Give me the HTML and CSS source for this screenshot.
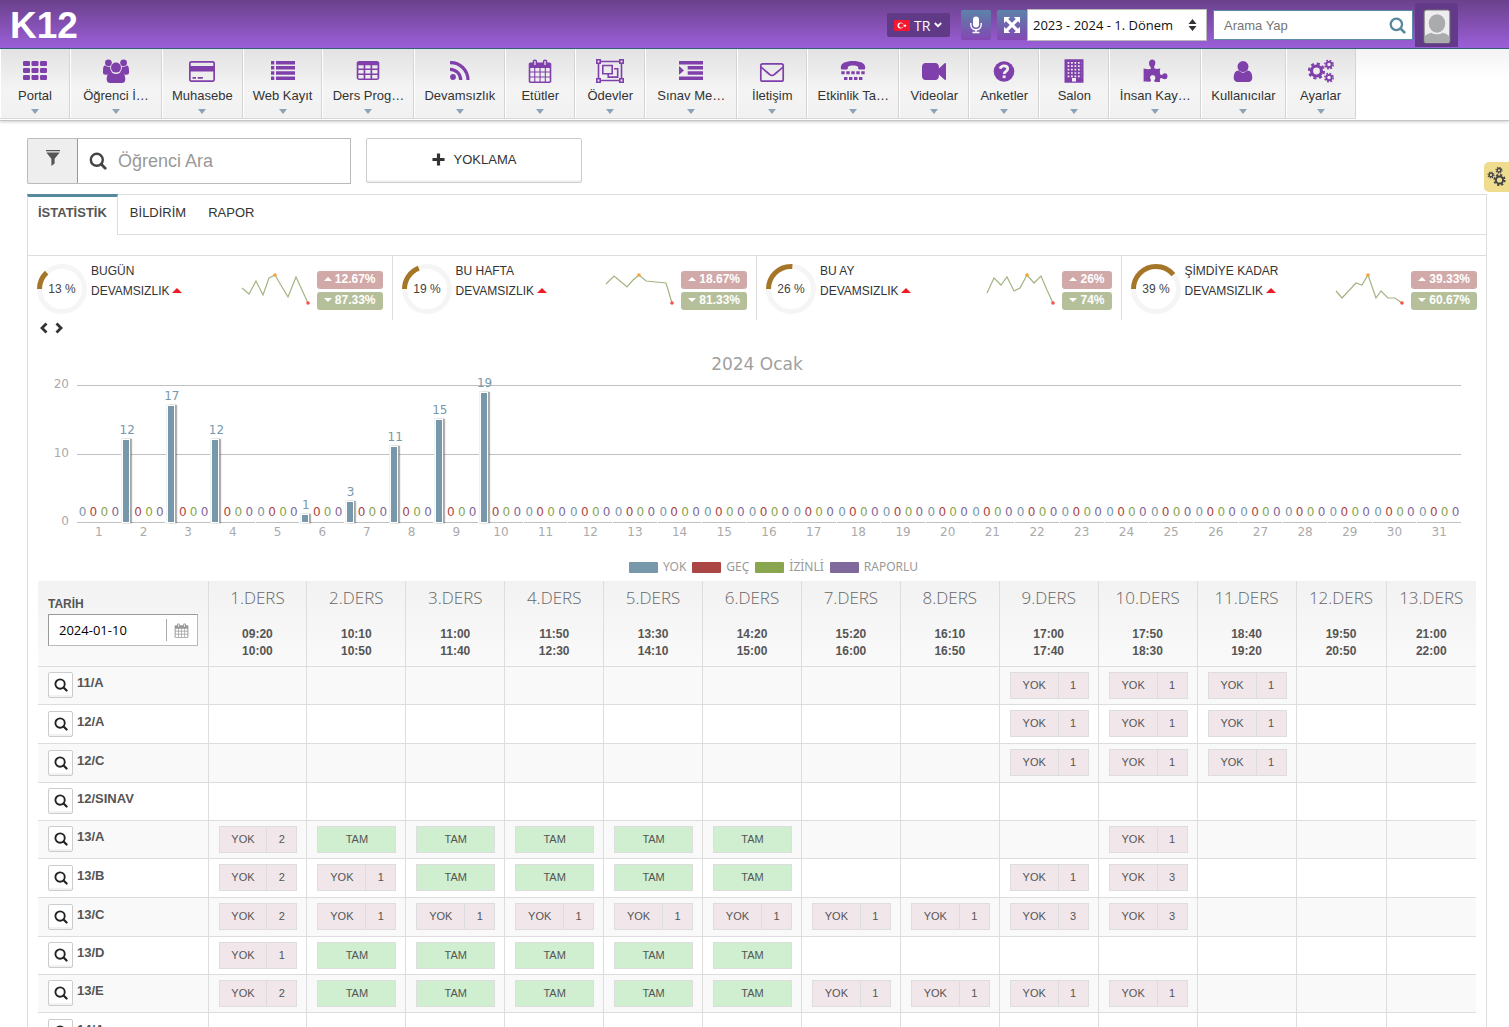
FILE: index.html
```html
<!DOCTYPE html>
<html lang="tr">
<head>
<meta charset="utf-8">
<meta name="viewport" content="width=device-width, initial-scale=1">
<title>K12</title>
<link rel="stylesheet" href="styles.css">
</head>
<body>
<svg class="sprite" aria-hidden="true">
  <symbol id="i-th" viewBox="0 0 28 24"><g fill="currentColor"><rect x="2" y="2" width="7" height="5" rx="1.2"/><rect x="10.5" y="2" width="7" height="5" rx="1.2"/><rect x="19" y="2" width="7" height="5" rx="1.2"/><rect x="2" y="9" width="7" height="5" rx="1.2"/><rect x="10.5" y="9" width="7" height="5" rx="1.2"/><rect x="19" y="9" width="7" height="5" rx="1.2"/><rect x="2" y="16" width="7" height="5" rx="1.2"/><rect x="10.5" y="16" width="7" height="5" rx="1.2"/><rect x="19" y="16" width="7" height="5" rx="1.2"/></g></symbol>
  <symbol id="i-users" viewBox="0 0 28 24"><g fill="currentColor"><circle cx="6.4" cy="3.8" r="3.4"/><circle cx="21.6" cy="3.8" r="3.4"/><path d="M1 11.5C1 8.400 1.800 6.600 2.900 6.600c.6 0 1.800 1.300 3.500 1.300.6 0 1.200-.1 1.700-.3-.1 2.200.6 4.200 2 5.800-2 .1-3.700.9-4.900 2.300H3.300C2 15.700 1 15 1 13.700zM27 11.500c0-3.100-.8-4.900-1.900-4.900-.6 0-1.800 1.300-3.500 1.300-.6 0-1.200-.1-1.700-.3.1 2.200-.6 4.200-2 5.800 2 .1 3.700.9 4.900 2.300h1.900c1.300 0 2.300-.7 2.300-2z"/><circle cx="14" cy="8.600" r="5"/><path d="M8.800 12.900c.7 0 2.300 2 5.200 2s4.500-2 5.200-2c2.800 0 4.100 3.700 4.100 7.500 0 2.200-1.400 3.600-3.500 3.600H8.200c-2.100 0-3.500-1.400-3.500-3.600 0-3.800 1.300-7.500 4.100-7.500z"/></g></symbol>
  <symbol id="i-card" viewBox="0 0 28 24"><path fill="currentColor" fill-rule="evenodd" d="M3.200 2h21.600C26 2 27 3 27 4.200v16.600c0 1.200-1 2.200-2.200 2.200H3.200C2 23 1 22 1 20.800V4.200C1 3 2 2 3.200 2zm0 1.700c-.3 0-.5.2-.5.5V7h22.600V4.200c0-.3-.2-.5-.5-.5zM2.700 12.500v8.300c0 .3.2.5.5.5h21.600c.3 0 .5-.2.5-.5v-8.300zM4.500 18H8v1.700H4.500zm5.200 0h5.200v1.700H9.700z"/></symbol>
  <symbol id="i-list" viewBox="0 0 28 24"><g fill="currentColor"><path d="M2 2h3.300v3.400H2zm0 5.100h3.300v3.400H2zm0 5.200h3.300v3.400H2zm0 5.200h3.300V21H2zM7 2h19v3.400H7zm0 5.100h19v3.400H7zm0 5.200h19v3.400H7zm0 5.200h19V21H7z"/></g></symbol>
  <symbol id="i-table" viewBox="0 0 28 24"><path fill="currentColor" fill-rule="evenodd" d="M5 2h18c1.300 0 2.300 1 2.300 2.200v14.600c0 1.200-1 2.200-2.300 2.200H5c-1.300 0-2.300-1-2.300-2.200V4.200C2.700 3 3.700 2 5 2zm-.6 4.300v3.300h5.200V6.300zm6.900 0v3.300h5.200V6.300zm6.900 0v3.300h5.300V6.300zM4.400 11.100v3.300h5.200v-3.300zm6.900 0v3.300h5.200v-3.300zm6.900 0v3.300h5.300v-3.300zM4.400 16v3.400h5.200V16zm6.900 0v3.400h5.200V16zm6.900 0v3.400h5.300V16z"/></symbol>
  <symbol id="i-rss" viewBox="0 0 28 24"><circle cx="7" cy="18" r="2.900" fill="currentColor"/><path fill="none" stroke="currentColor" stroke-width="3.200" d="M4 10.300A10.600 10.600 0 0 1 14.700 21M4 3.600A17.400 17.400 0 0 1 22 21"/></symbol>
  <symbol id="i-cal" viewBox="0 0 28 24"><path fill="currentColor" fill-rule="evenodd" d="M4.500 3.500h2.200V2.300c0-1 .9-1.800 1.900-1.800h.6c1 0 1.900.8 1.900 1.800v1.200h5.800V2.300c0-1 .9-1.800 1.900-1.800h.6c1 0 1.900.8 1.900 1.800v1.200h2.200c1 0 1.800.8 1.800 1.800v17c0 1-.8 1.700-1.800 1.700h-19c-1 0-1.800-.7-1.800-1.700v-17c0-1 .8-1.800 1.800-1.800zM8.300 2v4h1.300V2zm10.100 0v4h1.300V2zM4.300 9v3.500h3.900V9zm5 0v3.500h4.200V9zm5.300 0v3.500h4.200V9zm5.300 0v3.500h3.800V9zM4.300 13.600v3.800h3.900v-3.800zm5 0v3.800h4.200v-3.800zm5.300 0v3.800h4.200v-3.800zm5.300 0v3.800h3.800v-3.800zM4.300 18.500v4h3.900v-4zm5 0v4h4.200v-4zm5.300 0v4h4.200v-4zm5.300 0v4h3.800v-4z"/></symbol>
  <symbol id="i-group" viewBox="0 0 28 24"><g fill="none" stroke="currentColor" stroke-width="1.600"><path d="M5 2.500h18M5 21.500h18M2.500 5v14M25.500 5v14"/><path d="M.8.800h3.400v3.400H.8zm23 0h3.400v3.400h-3.400zm-23 19h3.400v3.400H.8zm23 0h3.400v3.400h-3.400z"/><path d="M6.800 6.500h9.400v8.200H6.800zM18 9.700h3.700v8.400h-9.500v-3"/></g></symbol>
  <symbol id="i-indent" viewBox="0 0 28 24"><path fill="currentColor" d="M2 2h24v3.400H2zm8.700 5.100H26v3.400H10.700zm0 5.200H26v3.400H10.700zM2 17.500h24V21H2zM2 7l5 4.500-5 4.300z"/></symbol>
  <symbol id="i-mail" viewBox="0 0 28 24"><rect x="2.800" y="4.800" width="22.400" height="17.400" rx="1.800" fill="none" stroke="currentColor" stroke-width="1.700"/><path fill="none" stroke="currentColor" stroke-width="1.700" d="M3 8c3.500 3.500 6 5 8.500 7.300 1.500 1.400 3.500 1.400 5 0C19 13 21.500 11.500 25 8"/></symbol>
  <symbol id="i-tty" viewBox="0 0 28 24"><g fill="currentColor"><path d="M14 2c7 0 12.200 2.200 12.200 6.200 0 1.500-.4 2.300-1.300 2.300h-4.600c-.8 0-1.200-.5-1.200-1.400V7.800C17.800 6.900 16 6.600 14 6.600s-3.800.3-5.100 1.200v1.300c0 .9-.4 1.400-1.200 1.400H3.100c-.9 0-1.300-.8-1.300-2.300C1.800 4.200 7 2 14 2z"/><path d="M2.300 12.300h3.400v3H2.300zm5 0h3.400v3H7.300zm5 0h3.400v3h-3.400zm5 0h3.400v3h-3.400zm5 0h3.400v3h-3.400zM5 18h3.400v3H5zm5 0h3.400v3H10zm5 0h3.400v3H15zm5 0h3.400v3H20z"/></g></symbol>
  <symbol id="i-video" viewBox="0 0 28 24"><path fill="currentColor" d="M5.500 4h9.700c2.100 0 3.700 1.600 3.700 3.700v1.700L24.600 4.200c.5-.5 1.400-.2 1.400.6v15.400c0 .8-.9 1.100-1.400.6l-5.700-5.200v1.700c0 2.100-1.600 3.700-3.700 3.700H5.500c-2 0-3.500-1.600-3.500-3.700V7.700C2 5.600 3.500 4 5.500 4z"/></symbol>
  <symbol id="i-help" viewBox="0 0 28 24"><circle cx="14" cy="12.500" r="10.300" fill="currentColor"/><path fill="none" stroke="#f0f0f0" stroke-width="2.800" d="M10 9.600c.8-1.800 2.200-2.700 4-2.700 2.100 0 3.700 1.200 3.700 2.900 0 2.600-3.500 2.600-3.500 5.200"/><rect x="12.700" y="16.400" width="2.900" height="2.700" fill="#f0f0f0"/></symbol>
  <symbol id="i-building" viewBox="0 0 28 24"><path fill="currentColor" fill-rule="evenodd" d="M4.500.3h19v23.500h-19zM12 19v3.600h4V19z"/><path stroke="#f0f0f0" stroke-width="1.700" stroke-dasharray="1.700 1.750" d="M7.600 3.800h14M7.600 7.200h14M7.600 10.600h14M7.600 14h14M7.600 17.400h14"/></symbol>
  <symbol id="i-puzzle" viewBox="0 0 28 24"><path fill="currentColor" d="M2.600 9.600c2 .4 4.200.6 6.200.5 1.600-.1 1.400-1.200.8-2C8.900 7.200 8 6.300 8 4.200 8 2 9.200.4 11.200.4s3.200 1.400 3.200 3.400c0 2.300-1.300 2.900-1.300 4.500 0 2.400 3.900 1.600 6.200 1.200-.4 2-.8 5.700.6 6.300 1.700.7 1.900-1.500 4.100-1.500 1.500 0 2.500 1.200 2.500 2.900s-1.100 3.100-2.700 3.100c-2 0-2.500-1.500-3.700-1.300-1.400.2-1.400 2.200-.9 4-2.300 0-3.900.2-5.400-.3-1.400-.5-.2-1.900.3-2.700.5-.9.500-3.700-2.300-3.700-2.700 0-3 2.100-2.500 3.200.6 1.400 1.300 2.500 0 3-1.700.5-4.200 0-6.700 0z"/></symbol>
  <symbol id="i-user" viewBox="0 0 28 24"><circle cx="14" cy="7.600" r="5.500" fill="currentColor"/><path fill="currentColor" d="M9.300 11.500c.8 0 2 2.200 4.700 2.200s3.900-2.200 4.700-2.200c2.700 0 4.600 2.900 4.600 7.200 0 2.500-1.600 4.300-3.900 4.300H8.600c-2.300 0-3.900-1.800-3.900-4.300 0-4.300 1.900-7.200 4.600-7.200z"/></symbol>
  <symbol id="i-gears" viewBox="0 0 28 24"><g fill="none" stroke="currentColor"><circle cx="9.500" cy="12" r="5" stroke-width="3.200"/><circle cx="9.500" cy="12" r="7.400" stroke-width="2.400" stroke-dasharray="3.100 2.710"/><g id="g-small"><circle cx="22" cy="5.600" r="2.700" stroke-width="1.900"/><circle cx="22" cy="5.600" r="4.200" stroke-width="1.500" stroke-dasharray="1.800 1.500"/></g><use href="#g-small" y="13"/></g></symbol>
  <symbol id="i-gears-flip" viewBox="0 0 20 20"><g fill="none" stroke="currentColor"><circle cx="12.500" cy="13" r="3.600" stroke-width="2"/><circle cx="12.500" cy="13" r="5.200" stroke-width="1.800" stroke-dasharray="2.200 1.880"/><circle cx="4" cy="8" r="1.800" stroke-width="1.300"/><circle cx="4" cy="8" r="2.900" stroke-width="1.200" stroke-dasharray="1.280 1"/><circle cx="12" cy="3.300" r="1.800" stroke-width="1.300"/><circle cx="12" cy="3.300" r="2.900" stroke-width="1.200" stroke-dasharray="1.280 1"/></g></symbol>
  <symbol id="i-search" viewBox="0 0 18 18"><circle cx="7.800" cy="7.800" r="6" fill="none" stroke="currentColor" stroke-width="2.400"/><path stroke="currentColor" stroke-width="2.800" stroke-linecap="round" d="m12.300 12.300 3.900 3.900"/></symbol>
  <symbol id="i-mic" viewBox="0 0 14 18"><rect x="4" y="0.500" width="6" height="11" rx="3" fill="currentColor"/><path fill="none" stroke="currentColor" stroke-width="1.400" d="M1.800 7v1.800c0 2.900 2.300 5 5.200 5s5.200-2.100 5.200-5V7M7 14v2.500M3.500 16.500h7"/></symbol>
  <symbol id="i-expand" viewBox="0 0 18 18"><path fill="currentColor" d="M1 1h6.200L5.200 3 9 6.800 12.800 3l-2-2H17v6.200l-2-2L11.200 9l3.800 3.800 2-2V17h-6.200l2-2L9 11.200 5.200 15l2 2H1v-6.200l2 2L6.800 9 3 5.200l-2 2z"/></symbol>
  <symbol id="i-flag" viewBox="0 0 16 11"><rect width="16" height="11" rx="1" fill="#f31830"/><circle cx="6.500" cy="5.500" r="3" fill="#fff"/><circle cx="7.300" cy="5.500" r="2.200" fill="#f31830"/><path fill="#fff" d="m11 3.900.5 1.100 1.200.1-.9.800.3 1.200-1.100-.6-1.100.6.300-1.200-.9-.8 1.200-.1z"/></symbol>
  <symbol id="i-down" viewBox="0 0 8 6"><path fill="none" stroke="currentColor" stroke-width="1.800" d="m.8 1 3.200 3.200L7.200 1"/></symbol>
  <symbol id="i-sort" viewBox="0 0 8 12"><path fill="#333" d="m4 0 4 5H0zm0 12L0 7h8z"/></symbol>
  <symbol id="i-filter" viewBox="0 0 16 18"><path fill="currentColor" d="M1 1h14v1.200H1zm.3 2.600h13.400L9.600 9.800v4.800L6.400 17V9.800z"/></symbol>
  <symbol id="i-plus" viewBox="0 0 14 14"><path stroke="currentColor" stroke-width="3.400" d="M7 .5v13M.5 7h13"/></symbol>
  <symbol id="i-prev" viewBox="0 0 10 12"><path fill="none" stroke="currentColor" stroke-width="2.800" d="M7.500 1.500 3 6l4.500 4.500"/></symbol>
  <symbol id="i-next" viewBox="0 0 10 12"><path fill="none" stroke="currentColor" stroke-width="2.800" d="M2.500 1.500 7 6l-4.500 4.500"/></symbol>
</svg>

<div class="app">
  <header class="topbar">
    <a class="logo" href="#">K12</a>
    <div class="tools">
      <button class="lang" type="button"><svg class="flag"><use href="#i-flag"/></svg>TR<svg class="down"><use href="#i-down"/></svg></button>
      <button class="tool mic" type="button" aria-label="Sesli komut"><svg><use href="#i-mic"/></svg></button>
      <button class="tool" type="button" aria-label="Tam ekran"><svg><use href="#i-expand"/></svg></button>
      <div class="term">
        <select aria-label="Dönem"><option>2023 - 2024 - 1. Dönem</option></select>
        <svg><use href="#i-sort"/></svg>
      </div>
      <form class="find">
        <input type="text" placeholder="Arama Yap" aria-label="Arama Yap">
        <button type="button" aria-label="Ara"><svg><use href="#i-search"/></svg></button>
      </form>
      <a class="avatar" href="#" aria-label="Profil"><svg viewBox="0 0 27 34"><rect x="1" y="1" width="25" height="32" rx="2" fill="#eee" stroke="#777"/><ellipse cx="13.500" cy="14" rx="8" ry="9" fill="#aaabad"/><path fill="#aaabad" d="M1.500 32.500v-5c0-2 3-3.500 6.500-4.500 3.500 2 7.500 2 11 0 3.500 1 6.500 2.500 6.500 4.500v5z"/></svg></a>
    </div>
  </header>

  <nav class="menu">
    <a href="#"><svg><use href="#i-th"/></svg>Portal</a>
    <a class="wide" href="#"><svg><use href="#i-users"/></svg>Öğrenci İ…</a>
    <a href="#"><svg><use href="#i-card"/></svg>Muhasebe</a>
    <a href="#"><svg><use href="#i-list"/></svg>Web Kayıt</a>
    <a class="wide" href="#"><svg><use href="#i-table"/></svg>Ders Prog…</a>
    <a href="#"><svg><use href="#i-rss"/></svg>Devamsızlık</a>
    <a href="#"><svg><use href="#i-cal"/></svg>Etütler</a>
    <a href="#"><svg><use href="#i-group"/></svg>Ödevler</a>
    <a class="wide" href="#"><svg><use href="#i-indent"/></svg>Sınav Me…</a>
    <a href="#"><svg><use href="#i-mail"/></svg>İletişim</a>
    <a class="wide" href="#"><svg><use href="#i-tty"/></svg>Etkinlik Ta…</a>
    <a href="#"><svg><use href="#i-video"/></svg>Videolar</a>
    <a href="#"><svg><use href="#i-help"/></svg>Anketler</a>
    <a href="#"><svg><use href="#i-building"/></svg>Salon</a>
    <a class="wide" href="#"><svg><use href="#i-puzzle"/></svg>İnsan Kay…</a>
    <a href="#"><svg><use href="#i-user"/></svg>Kullanıcılar</a>
    <a href="#"><svg><use href="#i-gears"/></svg>Ayarlar</a>
  </nav>

  <main class="content">
    <div class="actions">
      <div class="student">
        <button type="button" aria-label="Filtre"><svg><use href="#i-filter"/></svg></button>
        <label><svg><use href="#i-search"/></svg><input type="text" placeholder="Öğrenci Ara" aria-label="Öğrenci Ara"></label>
      </div>
      <button class="rollcall" type="button"><svg><use href="#i-plus"/></svg>YOKLAMA</button>
    </div>

    <section class="panel">
      <div class="tabs">
        <a class="active" href="#">İSTATİSTİK</a>
        <a href="#">BİLDİRİM</a>
        <a href="#">RAPOR</a>
      </div>

      <div class="stats" id="stats"></div>

      <div class="pager">
        <button type="button" aria-label="Önceki"><svg><use href="#i-prev"/></svg></button>
        <button type="button" aria-label="Sonraki"><svg><use href="#i-next"/></svg></button>
      </div>

      <div class="chart">
        <h2>2024 Ocak</h2>
        <div class="graph">
          <div class="axis"><span>20</span><span>10</span><span>0</span></div>
          <div class="plot" id="plot"></div>
        </div>
        <div class="legend">
          <span class="yok">YOK</span><span class="gec">GEÇ</span><span class="izinli">İZİNLİ</span><span class="raporlu">RAPORLU</span>
        </div>
      </div>

      <table class="lessons">
        <thead>
          <tr id="head">
            <th class="date" scope="col">
              <label for="date">TARİH</label>
              <span class="datebox"><input id="date" type="text" value="2024-01-10"><svg><use href="#i-cal"/></svg></span>
            </th>
          </tr>
        </thead>
        <tbody id="rows"></tbody>
      </table>
    </section>
  </main>

  <button class="settings" type="button" aria-label="Ayarlar"><svg><use href="#i-gears-flip"/></svg></button>
</div>
<script src="script.js"></script>
</body>
</html>
```
FILE: styles.css
```css
* { box-sizing: border-box; }
body { margin: 0; background: #fff; color: #333; font: 13px/20px "Liberation Sans", Arial, sans-serif; }
button, input, select { font: inherit; color: inherit; margin: 0; padding: 0; border: 0; background: none; border-radius: 0; }
button { cursor: pointer; }
a { color: inherit; text-decoration: none; }
svg { display: block; flex: none; }
.sprite { display: none; }
.app { display: flex; flex-direction: column; height: 100vh; position: relative; }

/* top bar */
.topbar { flex: none; display: flex; align-items: center; justify-content: space-between; height: 49px; padding: 0 51px 0 10px; border-bottom: 1px solid #35607c; background: linear-gradient(#6b418b, #9b5fd9); }
.logo { color: #fff; font-size: 37px; line-height: 48px; font-weight: bold; padding-top: 4px; }
.tools { display: flex; align-items: center; height: 48px; padding-top: 2px; }
.lang { display: flex; align-items: center; gap: 4px; height: 24px; width: 63px; padding: 0 7px; margin-right: 11px; border-radius: 2px; background: #603987; color: #fff; font: 14px "Open Sans", sans-serif; }
.flag { width: 16px; height: 11px; }
.down { width: 8px; height: 6px; }
.tool { display: grid; place-items: center; width: 30px; height: 30px; background: linear-gradient(#5b83a8, #8447b3); color: #fff; border-radius: 2px; }
.tool svg { width: 18px; height: 18px; }
.mic { margin-right: 6px; }
.term { position: relative; width: 180px; height: 32px; margin-right: 6px; }
.term select { appearance: none; width: 100%; height: 100%; padding: 0 24px 0 5px; border: 1px solid #bbb; background: #fff; color: #111; font: 13px "Open Sans", sans-serif; }
.term svg { position: absolute; right: 10px; top: 10px; width: 9px; height: 12px; pointer-events: none; }
.find { display: flex; align-items: center; width: 200px; height: 30px; padding: 0 6px 0 10px; border: 1px solid #5a8ca8; background: #fff; color: #57889c; }
.find input { flex: 1; min-width: 0; height: 28px; }
.find input::placeholder { color: #757575; }
.find svg { width: 17px; height: 17px; }
.avatar { display: grid; place-items: center; width: 43px; height: 44px; margin-left: 2px; padding-top: 3px; background: #63398a; border-radius: 3px 3px 0 0; }
.avatar svg { width: 28px; height: 35px; }

/* main menu */
.menu { flex: none; display: flex; height: 72px; padding-bottom: 1px; border-bottom: 1px solid #c4c4c4; background: linear-gradient(#f3f3f3, #fff 30px); box-shadow: 0 1px 3px rgba(0,0,0,.2); position: relative; }
.menu a { display: flex; flex-direction: column; align-items: center; min-width: 70px; padding: 10px 9px 0 10px; border-right: 1px solid #d4d4d4; border-bottom: 1px solid #d8d8d8; box-shadow: inset 1px 0 #fff; background: linear-gradient(#e2e2e2, #f4f4f4 40px, #f1f1f1); line-height: 16px; white-space: nowrap; }
.menu a.wide { width: 92px; }
.menu svg { width: 28px; height: 24px; margin-bottom: 5px; color: #8040ab; }
.menu a::after { content: ""; margin-top: 5px; border: 4px solid transparent; border-top: 5px solid #8ba2b8; border-bottom: 0; }

/* page */
.content { flex: 1; min-height: 0; overflow-y: auto; scrollbar-width: none; padding: 17px 22px 0 27px; }
.actions { display: flex; gap: 15px; margin-bottom: 10px; }
.student { display: flex; width: 324px; height: 46px; }
.student button { display: grid; place-items: center; width: 51px; border: 1px solid #bbb; border-right-color: #999; border-radius: 2px 0 0 2px; background: #eee; color: #555; padding-bottom: 6px; }
.student button svg { width: 16px; height: 18px; }
.student label { flex: 1; display: flex; align-items: center; gap: 11px; padding-left: 11px; border: 1px solid #bbb; border-left: 0; color: #444; }
.student label svg { width: 18px; height: 18px; }
.student input { flex: 1; min-width: 0; font-size: 18px; height: 40px; }
.student input::placeholder { color: #999; }
.rollcall { display: flex; align-items: center; justify-content: center; gap: 9px; width: 216px; height: 45px; padding-bottom: 2px; border: 1px solid #ccc; border-radius: 2px; box-shadow: inset 0 -2px rgba(0,0,0,.05); }
.rollcall svg { width: 13px; height: 13px; }
.panel { border: 1px solid #ddd; border-bottom: 0; padding-bottom: 20px; }
.tabs { display: flex; height: 41px; margin: -1px 0 20px -1px; box-shadow: inset 0 -1px #ddd; }
.tabs a { padding: 9px 11px; line-height: 20px; }
.tabs .active { margin-right: 1px; padding: 6px 10px; border: 1px solid #ddd; border-top: 3px solid #57889c; border-bottom: 0; background: #fff; color: #555; font-weight: bold; }
.stats { display: grid; grid-template-columns: repeat(4, 1fr); border-top: 1px solid #ddd; font-size: 12px; }
.stat { display: flex; height: 64px; padding: 5px 9px 0 9px; border-right: 1px solid #ddd; }
.stat:last-child { border-right: 0; }
.ring { width: 50px; height: 50px; margin-top: 3px; }
.ring text { font-size: 12px; fill: #444; text-anchor: middle; }
.stat p { margin: 0 auto 0 4px; white-space: nowrap; }
.stat p::after { content: ""; display: inline-block; margin-left: 3px; vertical-align: 2px; border: 5px solid transparent; border-bottom-color: #ed1c24; border-top: 0; }
.spark { width: 70px; height: 36px; margin: 10px 7px 0 0; overflow: visible; }
.rates { display: flex; flex-direction: column; gap: 3px; margin-top: 10px; }
.rates span { display: flex; align-items: center; height: 18px; padding: 0 7px 2px; border-radius: 3px; color: #fff; font-weight: bold; }
.rates span::before { content: ""; margin-right: 3px; border: 4px solid transparent; }
.up { background: #d2a9a9; }
.rates .up::before { border-bottom-color: #fff; border-top: 0; }
.fall { background: #b5c09b; }
.rates .fall::before { border-top-color: #fff; border-bottom: 0; }

/* chart */
.pager { display: flex; gap: 5px; padding: 2px 11px 0; }
.pager svg { width: 10px; height: 12px; }
.chart { padding: 20px 25px 0 11px; }
.chart h2 { margin: 0 0 11px 14px; color: #a0a0a0; font: 17px/20px "DejaVu Sans", sans-serif; text-align: center; }
.graph { display: flex; color: #aaa; font: 12px/14px "DejaVu Sans", sans-serif; }
.axis { flex: none; display: flex; flex-direction: column; justify-content: space-between; width: 38px; height: 151px; margin-top: -8px; padding-right: 8px; text-align: right; }
.plot { flex: 1; display: grid; grid-template-columns: repeat(31, 1fr); column-gap: 1px; height: 138px; border-top: 1px solid #c0c0c0; background: linear-gradient(#c0c0c0, #c0c0c0) 0 68px / 100% 1px no-repeat; }
.day { display: flex; flex-direction: column; text-align: center; min-width: 0; }
.cols { flex: none; display: flex; height: 137px; border-bottom: 1px solid #c0c0c0; }
.col { flex: 1; display: flex; flex-direction: column; align-items: center; justify-content: flex-end; min-width: 0; }
.col b { flex: none; font-weight: normal; margin-bottom: 3px; }
.bar { flex: none; width: 6px; margin-right: 2px; background: #7798ab; box-shadow: 0 0 0 1px #fff, 2px 0 1px 1px rgba(0,0,0,.3), 0 0 0 2px #f0f0f0; }
.day small { font-size: 12px; padding-top: 2px; }
.col.yok { color: #7798ab; }
.col.gec { color: #aa4643; }
.col.izinli { color: #89a54e; }
.col.raporlu { color: #80699b; }
.legend { display: flex; justify-content: center; gap: 6px; margin: 31px 0 0 47px; color: #999; font: 12px/16px "Noto Sans", sans-serif; }
.legend span { display: flex; align-items: center; gap: 5px; }
.legend span::before { content: ""; width: 29px; height: 11px; border-radius: 1px; background: currentColor; }
.legend .yok::before { background: #7798ab; }
.legend .gec::before { background: #aa4643; }
.legend .izinli::before { background: #89a54e; }
.legend .raporlu::before { background: #80699b; }

/* lessons */
.lessons { table-layout: fixed; width: calc(100% - 20px); margin: 6px 10px 0; border-collapse: collapse; color: #555; }
.lessons th, .lessons td { border-left: 1px solid #ddd; border-bottom: 1px solid #ddd; padding: 0 9px 0 10px; }
.lessons tr > :first-child { border-left: 0; }
.lessons thead { background: linear-gradient(#f2f2f2, #fafafa); }
.lessons thead th { height: 85px; width: auto; padding: 7px 0 0; vertical-align: top; font-size: 12px; line-height: 17px; }
.lessons thead th.date { width: 170px; padding: 15px 10px 0; text-align: left; }
.lessons thead th.late { width: 90px; }
.title { display: block; margin-bottom: 18px; color: #666; font: 300 17px/20px "Open Sans", sans-serif; }
.datebox { display: flex; align-items: center; width: 150px; height: 32px; margin-top: 1px; padding-right: 7px; border: 1px solid #bbb; border-top-color: #999; border-left-color: #999; background: #fff; color: #999; }
.datebox input { flex: 1; min-width: 0; height: 22px; padding-left: 10px; margin-right: 6px; border-right: 1px solid #aaa; color: #000; font: 13px "Open Sans", sans-serif; }
.datebox svg { width: 17px; height: 15px; }
.lessons tbody tr { height: 38px; }
.lessons tbody tr:nth-child(4n+2), .lessons tbody tr:nth-child(4n+3) { height: 39px; }
.lessons tbody tr:nth-child(odd) { background: #f9f9f9; }
.class { display: flex; gap: 4px; line-height: 22px; font-weight: bold; }
.class button { display: grid; place-items: center; width: 25px; height: 26px; border: 1px solid #ccc; border-radius: 2px; background: #fff; box-shadow: inset 0 -2px rgba(0,0,0,.05); color: #222; }
.class svg { width: 14px; height: 14px; }
.mark { display: flex; width: 100%; height: 27px; border: 1px solid #ddd; font-size: 11px; line-height: 25px; text-align: center; }
.mark span { flex: 1; }
.mark .count { flex: none; width: 30px; border-left: 1px solid #ddd; }
.absent { background: #f1e6ea; }
.full { background: #d0efd0; }

.settings { position: absolute; right: 0; top: 162px; width: 25px; height: 30px; padding: 4px 3px; border-radius: 5px 0 0 5px; background: #f0dc8e; color: #444; }
.settings svg { width: 20px; height: 20px; }
```
FILE: script.js
```javascript
const byId = (id) => document.getElementById(id);

// Summary cards: caption, absence share, trend points, rates, index of the peak
const stats = [
  ["BUGÜN", 13, "2,17 9,23 16,10 23,24 29,7 35,4 42,16 48,26 56,6 68,32", "12.67%", "87.33%", [35, 4]],
  ["BU HAFTA", 19, "2,13 10,5 16,10 23,16 29,9 35,4 42,10 62,12 68,32", "18.67%", "81.33%", [35, 4]],
  ["BU AY", 26, "2,22 9,7 16,14 22,6 29,20 35,17 42,4 49,12 56,5 62,19 68,32", "26%", "74%", [42, 4]],
  ["ŞİMDİYE KADAR", 39, "2,20 8,27 22,12 28,14 34,4 42,27 47,20 54,27 61,27 68,32", "39.33%", "60.67%", [34, 4]],
];
byId("stats").innerHTML = stats.map(([name, pct, line, up, down, peak]) => `
  <div class="stat">
    <svg class="ring" viewBox="0 0 50 50">
      <circle cx="25" cy="25" r="22.5" fill="none" stroke="#f5f5f5" stroke-width="5"/>
      <circle cx="25" cy="25" r="22.5" fill="none" stroke="#a57628" stroke-width="5" pathLength="100" stroke-dasharray="${pct} 100" transform="rotate(180 25 25)"/>
      <text x="25" y="29">${pct} %</text>
    </svg>
    <p>${name}<br>DEVAMSIZLIK</p>
    <svg class="spark" viewBox="0 0 70 36">
      <polyline points="${line}" fill="none" stroke="#a3b482" stroke-width="1.2"/>
      <circle cx="${peak[0]}" cy="${peak[1]}" r="1.8" fill="#f9a13a"/>
      <circle cx="68" cy="32" r="1.8" fill="#f4524d"/>
    </svg>
    <div class="rates"><span class="up">${up}</span><span class="fall">${down}</span></div>
  </div>`).join("");

// Daily absences of the month; the scale runs from 0 to 20
const absences = { 2: 12, 3: 17, 4: 12, 6: 1, 7: 3, 8: 11, 9: 15, 10: 19 };
byId("plot").innerHTML = Array.from({ length: 31 }, (_, i) => {
  const day = i + 1;
  const cols = ["yok", "gec", "izinli", "raporlu"].map((kind) => {
    const n = kind === "yok" ? absences[day] || 0 : 0;
    const bar = n ? `<i class="bar" style="height:${n * 5}%"></i>` : "";
    return `<div class="col ${kind}"><b>${n}</b>${bar}</div>`;
  }).join("");
  return `<div class="day"><div class="cols">${cols}</div><small>${day}</small></div>`;
}).join("");

const hours = ["09:20 10:00", "10:10 10:50", "11:00 11:40", "11:50 12:30", "13:30 14:10", "14:20 15:00", "15:20 16:00", "16:10 16:50", "17:00 17:40", "17:50 18:30", "18:40 19:20", "19:50 20:50", "21:00 22:00"];
byId("head").insertAdjacentHTML("beforeend", hours.map((h, i) =>
  `<th scope="col"${i > 10 ? ' class="late"' : ""}><span class="title">${i + 1}.DERS</span>${h.replace(" ", "<br>")}</th>`).join(""));

// One character per lesson: T = everyone present, digit = number absent, "." = no record
const classes = [
  ["11/A", "........111.."],
  ["12/A", "........111.."],
  ["12/C", "........111.."],
  ["12/SINAV", "............."],
  ["13/A", "2TTTTT...1..."],
  ["13/B", "21TTTT..13..."],
  ["13/C", "2111111133..."],
  ["13/D", "1TTTTT......."],
  ["13/E", "2TTTTT1111..."],
  ["14/A", "............."],
];
const mark = (c) => {
  if (c === ".") return "";
  if (c === "T") return '<button type="button" class="mark full"><span>TAM</span></button>';
  return `<button type="button" class="mark absent"><span>YOK</span><span class="count">${c}</span></button>`;
};
byId("rows").innerHTML = classes.map(([name, lessons]) => `
  <tr><td><div class="class"><button type="button" aria-label="${name} ara"><svg><use href="#i-search"/></svg></button>${name}</div></td>${
    [...lessons].map((c) => `<td>${mark(c)}</td>`).join("")}</tr>`).join("");
```
